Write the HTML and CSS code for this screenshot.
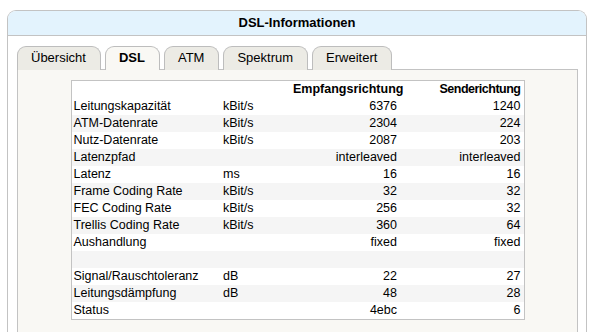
FILE: index.html
```html
<!DOCTYPE html>
<html lang="de">
<head>
  <meta charset="UTF-8" />
  <title>DSL-Informationen</title>
  <link rel="stylesheet" href="styles.css">
</head>
<body>
  <div class="box">
    <div class="box-head">DSL-Informationen</div>
    <div class="box-body">
      <ul class="tabs">
        <li>Übersicht</li>
        <li class="active">DSL</li>
        <li>ATM</li>
        <li>Spektrum</li>
        <li>Erweitert</li>
      </ul>

      <div class="panel">
        <table class="dsl">
          <colgroup>
            <col class="c-label">
            <col class="c-unit">
            <col class="c-down">
            <col class="c-up">
          </colgroup>
          <thead>
            <tr><th></th><th></th><th>Empfangsrichtung</th><th class="narrow">Senderichtung</th></tr>
          </thead>
          <tbody>
            <tr><td>Leitungskapazität</td><td>kBit/s</td><td>6376</td><td>1240</td></tr>
            <tr><td>ATM-Datenrate</td><td>kBit/s</td><td>2304</td><td>224</td></tr>
            <tr><td>Nutz-Datenrate</td><td>kBit/s</td><td>2087</td><td>203</td></tr>
            <tr><td>Latenzpfad</td><td></td><td>interleaved</td><td>interleaved</td></tr>
            <tr><td>Latenz</td><td>ms</td><td>16</td><td>16</td></tr>
            <tr><td>Frame Coding Rate</td><td>kBit/s</td><td>32</td><td>32</td></tr>
            <tr><td>FEC Coding Rate</td><td>kBit/s</td><td>256</td><td>32</td></tr>
            <tr><td>Trellis Coding Rate</td><td>kBit/s</td><td>360</td><td>64</td></tr>
            <tr><td>Aushandlung</td><td></td><td>fixed</td><td>fixed</td></tr>
            <tr><td>&nbsp;</td><td></td><td></td><td></td></tr>
            <tr><td>Signal/Rauschtoleranz</td><td>dB</td><td>22</td><td>27</td></tr>
            <tr><td>Leitungsdämpfung</td><td>dB</td><td>48</td><td>28</td></tr>
            <tr><td>Status</td><td></td><td>4ebc</td><td>6</td></tr>
          </tbody>
        </table>
      </div>
    </div>
  </div>
</body>
</html>
```

FILE: styles.css
```css
/* Global */
* {
  box-sizing: border-box;
}

body {
  margin: 0;
  padding: 10px 7px 0 7px;
  background-color: #fff;
  color: #000;
  font-family: 'Liberation Sans', Arial, sans-serif;
  font-size: 13px;
  overflow: hidden;
}

/* Outer box */
.box {
  width: 580px;
  border: 1px solid #c3c3c3;
  border-bottom: none;
  border-radius: 9px 9px 0 0;
  height: 340px;
}

.box-head {
  height: 25px;
  line-height: 24px;
  text-align: center;
  font-weight: bold;
  background-color: #e3f3fd;
  border-bottom: 1px solid #c3c3c3;
  border-radius: 8px 8px 0 0;
}

.box-body {
  padding: 10px 8px 0 9px;
}

/* Tabs */
.tabs {
  display: flex;
  gap: 4px;
  list-style: none;
  margin: 0;
  padding: 0;
  position: relative;
  z-index: 1;
}

.tabs li {
  height: 24px;
  line-height: 22px;
  padding: 0 14px 0 13px;
  background-color: #ecebe5;
  border: 1px solid #bdbdbd;
  border-bottom: none;
  border-radius: 9px 9px 0 0;
  margin-bottom: -1px;
}

.tabs li.active {
  background-color: #f9f8f4;
  font-weight: bold;
}

/* Panel */
.panel {
  background-color: #f9f8f4;
  border: 1px solid #c3c3c3;
  border-bottom: none;
  padding: 10px 0 20px 0;
  height: 280px;
}

/* DSL table */
.dsl {
  margin: 0 auto;
  width: 454px;
  border-collapse: collapse;
  border: 1px solid #c3c3c3;
  background-color: #fff;
  table-layout: fixed;
  font-size: 12.5px;
}

.c-label { width: 150px; }
.c-unit { width: 70px; }
.c-down { width: 109px; }
.c-up { width: 124px; }

.dsl th,
.dsl td {
  padding: 1px 3px 1px 2px;
  line-height: 15px;
  white-space: nowrap;
  text-align: left;
}

.dsl th {
  text-align: right;
}

.dsl th.narrow {
  letter-spacing: -0.5px;
}

.dsl td:nth-child(3),
.dsl td:nth-child(4) {
  text-align: right;
}

.dsl tbody tr:nth-child(even) {
  background-color: #f5f5f5;
}
```
